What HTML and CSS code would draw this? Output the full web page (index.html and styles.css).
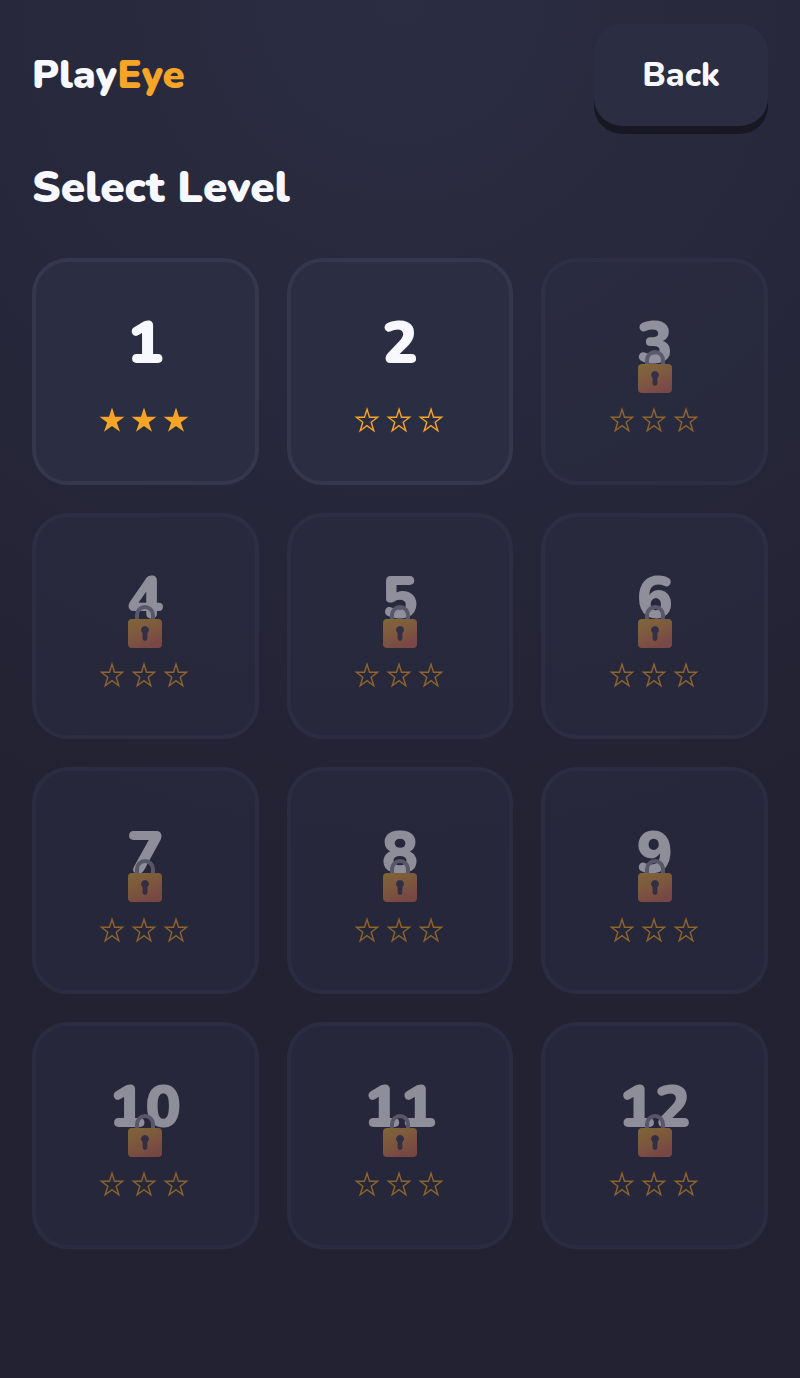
FILE: index.html
```html
<!DOCTYPE html>
<html lang="en">

<head>
    <meta charset="UTF-8">
    <meta name="viewport" content="width=device-width, initial-scale=1.0">
    <title>PlayEye - Select Level</title>
    <link rel="stylesheet" href="styles.css">
</head>

<body>
    <!-- Shared icons -->
    <svg class="sprite" aria-hidden="true">
        <defs>
            <linearGradient id="lockBody" x1="0" y1="0" x2="0.5" y2="1">
                <stop offset="0" stop-color="#dba83c" />
                <stop offset="0.5" stop-color="#d88f46" />
                <stop offset="1" stop-color="#cc6c56" />
            </linearGradient>
        </defs>
        <symbol id="star" viewBox="0 0 26 26">
            <path d="M13 0.5 L16 9.8 H25.5 L17.8 15.4 L21 24.8 L13 19 L5 24.8 L8.2 15.4 L0.5 9.8 H10 Z" />
        </symbol>
        <symbol id="star-outline" viewBox="0 0 26 26">
            <path d="M13 2.3 L15.5 10.2 H23.6 L17.2 15.2 L19.8 23.7 L13 18.6 L6.2 23.7 L8.8 15.2 L2.4 10.2 H10.5 Z" />
        </symbol>
        <symbol id="lock" viewBox="0 0 34 43">
            <path d="M9 16 V10 a8 8 0 0 1 16 0 V16" fill="none" stroke="#8f8aa0" stroke-width="4" />
            <rect x="0" y="14" width="34" height="29" rx="4" fill="url(#lockBody)" />
            <path d="M17 21 a4 4 0 0 1 2.4 7.2 V33.5 a2.4 2.4 0 0 1 -4.8 0 V28.2 A4 4 0 0 1 17 21 Z" fill="#433b55" />
        </symbol>
    </svg>

    <header class="header">
        <div class="logo">Play<span>Eye</span></div>
        <button type="button" class="btn-back">Back</button>
    </header>

    <main>
        <h1>Select Level</h1>
        <div class="level-grid" id="levelGrid"></div>
    </main>

    <script src="script.js"></script>
</body>

</html>
```

FILE: styles.css
```css
* {
    box-sizing: border-box;
}

body {
    margin: 0;
    padding: 24px 32px;
    min-height: 100vh;
    font-family: Nunito, Lato, sans-serif;
    color: #f8f9ff;
    background: radial-gradient(circle at top, #2b2d42, #222233 60%) no-repeat #222233;
}

.sprite {
    position: absolute;
    width: 0;
    height: 0;
}

.header {
    display: flex;
    justify-content: space-between;
    align-items: center;
    margin-bottom: 32px;
}

.logo {
    font-size: 40px;
    font-weight: 900;
}

.logo span {
    color: #f7a526;
}

.btn-back {
    padding: 28px 48px;
    border: none;
    border-radius: 28px;
    font-family: inherit;
    font-size: 34px;
    font-weight: 800;
    line-height: 46px;
    color: #f8f9ff;
    background: #2b2d42;
    box-shadow: 0 8px 0 #171823;
    cursor: pointer;
}

h1 {
    margin: 0 0 40px;
    font-size: 44px;
    font-weight: 900;
    line-height: 60px;
}

.level-grid {
    display: grid;
    grid-template-columns: repeat(3, 1fr);
    gap: 28px;
}

.level-card {
    position: relative;
    display: flex;
    flex-direction: column;
    align-items: center;
    justify-content: center;
    gap: 28px;
    aspect-ratio: 1;
    padding: 0 0 2px;
    border: 4px solid #35374f;
    border-radius: 36px;
    font-family: inherit;
    color: #f8f9ff;
    background: #2b2d42;
    cursor: pointer;
}

.level-card.locked {
    opacity: 0.5;
    cursor: not-allowed;
}

.level-number {
    font-size: 60px;
    font-weight: 900;
    line-height: 72px;
}

.stars {
    display: flex;
    gap: 6px;
    padding-right: 2px;
}

.star {
    width: 26px;
    height: 26px;
    fill: none;
    stroke: #f7a526;
    stroke-width: 1.4;
}

.star.filled {
    fill: #f7a526;
    stroke: none;
}

.lock {
    position: absolute;
    inset: 0;
    width: 34px;
    height: 43px;
    margin: auto;
}
```

FILE: script.js
```js
const levels = [
    { stars: 3 },
    { stars: 0 }
];
const totalLevels = 12;
const grid = document.getElementById('levelGrid');

for (let i = 1; i <= totalLevels; i++) {
    const level = levels[i - 1];
    const card = document.createElement('button');
    card.type = 'button';
    card.className = level ? 'level-card' : 'level-card locked';
    card.disabled = !level;

    let stars = '';
    for (let s = 0; s < 3; s++) {
        if (level && s < level.stars) {
            stars += '<svg class="star filled"><use href="#star"/></svg>';
        } else {
            stars += '<svg class="star"><use href="#star-outline"/></svg>';
        }
    }

    card.innerHTML = `
        <span class="level-number">${i}</span>
        <span class="stars">${stars}</span>
        ${level ? '' : '<svg class="lock"><use href="#lock"/></svg>'}
    `;
    grid.appendChild(card);
}
```
